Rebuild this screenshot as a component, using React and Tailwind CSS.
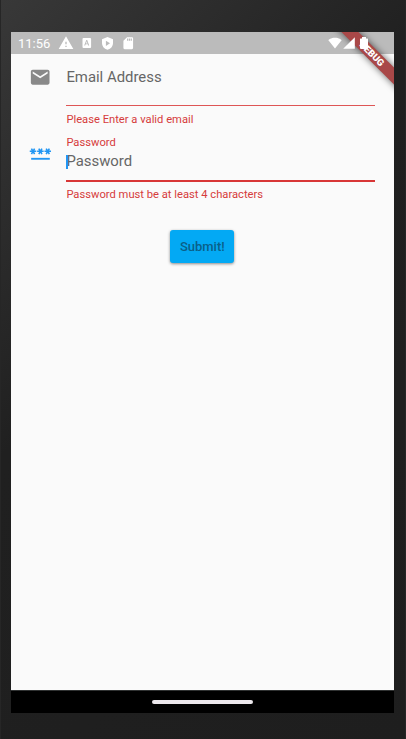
import React from "react";
import { MdEmail, MdWarning, MdSignalWifi4Bar, MdSignalCellular4Bar, MdSdCard } from "react-icons/md";

function StatusBar() {
  return (
    <div className="flex h-[22px] shrink-0 items-center bg-[#bbbbbb] text-white">
      <span className="ml-[7px] mt-px w-[33px] whitespace-nowrap text-[13px] leading-[22px]">11:56</span>
      <MdWarning className="ml-[7px] size-[16px]" />
      <svg className="ml-[8px] size-[10px]" viewBox="0 0 10 10">
        <path fill="white" fillRule="evenodd" d="M1.5 0h6.6q1 0 1 1v8q0 1-1 1H1.500q-1 0-1-1V1q0-1 1-1zM4.300 2 2.200 7.500h1l.45-1.250h2.100l.45 1.250h1L5.200 2zm.45 1.300.7 2.100H4z" />
      </svg>
      <svg className="ml-[10px] h-[13px] w-[11px]" viewBox="0 0 11 13">
        <path fill="white" fillRule="evenodd" d="M5.500 0 11 2.200v4q0 4.500-5.500 6.600Q0 10.700 0 6.200v-4zM3.900 3.700v5.200L8 6.300z" />
      </svg>
      <MdSdCard className="ml-[8px] size-[14.500px]" />
      <div className="relative z-10 ml-auto mr-[23px] flex items-center">
        <MdSignalWifi4Bar className="size-[14px]" />
        <MdSignalCellular4Bar className="size-[14px]" />
        <svg className="ml-[1px] h-[14px] w-[14px]" viewBox="0 0 14 14">
          <path fill="white" d="M5 1h4v1.500h1.500q.5 0 .5.500v9q0 1-1 1H4q-1 0-1-1V3q0-.5.500-.5H5z" />
        </svg>
      </div>
    </div>
  );
}

function PasswordIcon() {
  return (
    <svg className="mt-[6px] size-[22.400px] shrink-0" viewBox="0 0 24 24" fill="none" stroke="#2196f3">
      <path strokeWidth="2" d="M2.300 18h20" />
      <path
        strokeWidth="1.700"
        d="M.8 10h7M2.600 7l3.400 6M6 7l-3.400 6M8.700 10h7M10.500 7l3.400 6M13.900 7l-3.400 6M16.600 10h7M18.400 7l3.400 6M21.800 7l-3.400 6"
      />
    </svg>
  );
}

function DebugBanner() {
  return (
    <div className="pointer-events-none absolute right-0 top-0 size-[70px] overflow-hidden">
      <div className="absolute left-[-2px] top-[16px] flex h-[11.500px] w-[100px] rotate-45 items-center justify-center bg-[#a94848] text-[9.500px] font-black leading-none text-white shadow-[0_0_7px_rgba(0,0,0,0.6)]">
        DEBUG
      </div>
    </div>
  );
}

export default function App() {
  return (
    <div className="flex h-[739px] w-[406px] flex-col border-x border-[#262626] bg-linear-135 from-[#383838] via-[#202020] via-40% to-[#1e1e1e] pl-[10px] pr-[11px] pt-[32px] font-[Roboto,sans-serif]">
      <div className="relative flex h-[681px] flex-col bg-[#fafafa]">
        <StatusBar />
        <DebugBanner />
        <main className="flex flex-1 flex-col pl-[18.300px] pr-[19px]">
          <div className="flex h-[82px]">
            <MdEmail className="mt-[12px] size-[22.400px] shrink-0 text-[#898989]" />
            <div className="ml-[14.700px] flex-1">
              <div className="h-[51px] pt-[13px] text-[14.900px] leading-[21px] text-[#666666]">Email Address</div>
              <div className="h-px bg-[#de5656]" />
              <div className="mt-[6px] text-[11.200px] leading-[15px] text-[#d63c3c]">Please Enter a valid email</div>
            </div>
          </div>
          <div className="flex h-[94px]">
            <PasswordIcon />
            <div className="ml-[14.700px] flex-1">
              <div className="h-[44px]">
                <div className="text-[11.200px] leading-[14px] text-[#d63c3c]">Password</div>
                <div className="mt-[2px] flex h-[19px] items-center text-[14.900px] text-[#666666]">
                  <span className="relative z-10 -mr-[1.500px] h-[14px] w-[1.500px] shrink-0 bg-[#2196f3]" />
                  Password
                </div>
              </div>
              <div className="h-[2px] bg-[#d83636]" />
              <div className="mt-[6px] text-[11.200px] leading-[14px] text-[#d63c3c]">Password must be at least 4 characters</div>
            </div>
          </div>
          <button className="ml-[141px] h-[33px] w-[64px] rounded-[3px] bg-[#03a9f4] text-[13px] font-medium text-[#0a6088] shadow-[0_1px_3px_rgba(0,0,0,0.45)]">Submit!</button>
        </main>
        <nav className="flex h-[23px] shrink-0 items-center justify-center border-t border-[#303232] bg-black">
          <div className="h-[4px] w-[101px] rounded-full bg-[#ece8ec]" />
        </nav>
      </div>
    </div>
  );
}
